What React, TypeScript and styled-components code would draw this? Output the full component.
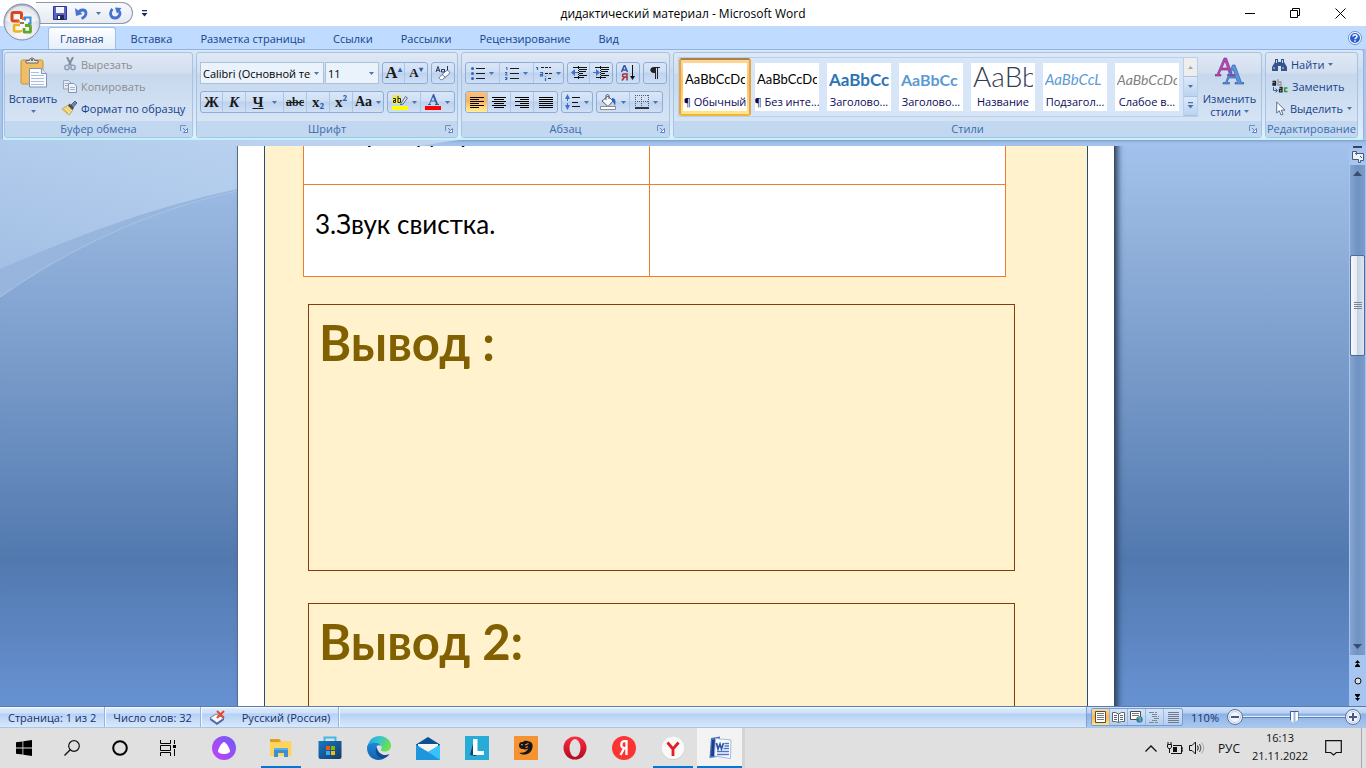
import React from "react";
import styled, { createGlobalStyle, css } from "styled-components";

const GlobalStyle = createGlobalStyle`
  * { box-sizing: border-box; }
  html, body { margin: 0; padding: 0; }
  body { font-family: "Open Sans", "Noto Sans", sans-serif; font-size: 11px; color: #15428b; }
  button, select, input { font: inherit; color: inherit; margin: 0; }
  button { border: 0; background: none; padding: 0; white-space: nowrap; }
`;

const Screen = styled.div`
  display: flex;
  flex-direction: column;
  height: 100vh;
  overflow: hidden;
`;

/* ---------- title bar ---------- */

const TitleBar = styled.header`
  position: relative;
  display: grid;
  grid-template-columns: 1fr auto 1fr;
  align-items: center;
  height: 26px;
  flex: none;
  background: #fff;
`;

const QuickAccess = styled.div`
  display: flex;
  align-items: center;
  gap: 8px;
  padding-left: 36px;
`;

const QuickPill = styled.div`
  display: flex;
  align-items: center;
  gap: 8px;
  height: 22px;
  width: 97px;
  padding-left: 17px;
  border: 1px solid #8d98a8;
  border-left: 0;
  border-radius: 0 11px 11px 0;
  background: linear-gradient(#f7f9fc, #e6ebf3);
`;

const IconButton = styled.button`
  display: inline-flex;
  align-items: center;
  justify-content: center;
`;

const Caption = styled.h1`
  margin: 0;
  font-size: 12px;
  font-weight: 400;
  color: #000;
  white-space: nowrap;
`;

const WindowButtons = styled.div`
  display: flex;
  justify-content: flex-end;
  padding-right: 3px;
`;

const WindowButton = styled(IconButton)`
  width: 45px;
  height: 24px;
`;

const OfficeButton = styled.button`
  position: absolute;
  z-index: 2;
  left: 3px;
  top: 3px;
  width: 38px;
  height: 38px;
`;

/* ---------- ribbon ---------- */

const TabRow = styled.nav`
  display: flex;
  align-items: flex-end;
  height: 23px;
  flex: none;
  padding: 0 4px 0 48px;
  background: #bfdbff;
`;

const Tab = styled.button<{ $active?: boolean }>`
  height: 22px;
  padding: 0 13px;
  border: 1px solid transparent;
  border-bottom: 0;
  ${(p) =>
    p.$active &&
    css`
      padding: 0 11px;
      margin-right: 1px;
      border-color: #9dbde8;
      border-radius: 3px 3px 0 0;
      background: linear-gradient(#fdfeff, #e4eefa);
    `}
`;

const HelpButton = styled(IconButton)`
  margin-left: auto;
  height: 22px;
`;

const RibbonShell = styled.div`
  flex: none;
  background: #a9c5ec;
  padding: 0 2px;
`;

const Ribbon = styled.div`
  display: flex;
  gap: 3px;
  height: 91px;
  padding: 2px 5px 2px 1px;
  border: 1px solid #8db2e3;
  border-bottom: 2px solid #c3f2fa;
  border-radius: 3px;
  background: linear-gradient(#dce7f5 0, #d0deef 20%, #c8d9ed 22%, #dfeefb 100%);
`;

const Group = styled.section<{ $w?: number }>`
  display: flex;
  flex-direction: column;
  height: 86px;
  width: ${(p) => (p.$w ? p.$w + "px" : "auto")};
  flex: ${(p) => (p.$w ? "none" : "1")};
  min-width: 0;
  border: 1px solid #a5c3e4;
  border-radius: 3px;
  background: linear-gradient(#dfe8f4 0, #d3dfef 20px, #c7d8ed 21px, #dbe8f7 100%);
  overflow: hidden;
`;

const GroupBody = styled.div`
  display: flex;
  flex: 1;
  min-height: 0;
`;

const GroupLabel = styled.footer`
  display: grid;
  grid-template-columns: 16px 1fr 16px;
  align-items: center;
  justify-items: center;
  height: 16px;
  line-height: 16px;
  background: #c2d8f1;
  color: #3e6aaa;
  white-space: nowrap;
`;

const GroupName = styled.span<{ $full?: boolean }>`
  grid-column: ${(p) => (p.$full ? "1 / 4" : "2")};
`;

const BigButton = styled.button<{ $w: number }>`
  display: flex;
  flex-direction: column;
  align-items: center;
  width: ${(p) => p.$w}px;
  padding-top: 4px;
  line-height: 13px;
`;

const BigText = styled.span<{ $top: number }>`
  margin-top: ${(p) => p.$top}px;
  text-align: center;
`;

const CommandList = styled.div`
  display: flex;
  flex-direction: column;
`;

const Command = styled.button<{ $pad?: number }>`
  display: flex;
  align-items: center;
  gap: 4px;
  height: 22px;
  padding-left: ${(p) => p.$pad || 0}px;
  &:disabled { color: #8d8d8d; }
`;

const ToolRows = styled.div`
  display: flex;
  flex-direction: column;
  gap: 7px;
  padding: 9px 3px 0;
`;

const ToolRow = styled.div`
  display: flex;
  gap: 3px;
  height: 22px;
`;

const ToolSet = styled.div`
  display: flex;
  flex: none;
  height: 22px;
  border: 1px solid #8eaeda;
  border-radius: 3px;
  background: linear-gradient(#d9e6f7 0, #cfdff4 9px, #bdd2ee 10px, #cfe0f6 100%);
  overflow: hidden;
`;

const Tool = styled.button<{ $w: number; $on?: boolean }>`
  display: flex;
  align-items: center;
  justify-content: center;
  gap: 4px;
  width: ${(p) => p.$w}px;
  border-right: 1px solid #aec6e6;
  background: ${(p) => (p.$on ? "linear-gradient(#f5c088, #fbb45c 45%, #ffdc7c 80%, #ffeb9a)" : "none")};
  &:last-child { border-right: 0; }
`;

const ComboPair = styled.div`
  display: flex;
  gap: 1px;
`;

const Combo = styled.div<{ $w: number }>`
  display: grid;
  grid-template-columns: 1fr;
  align-items: center;
  width: ${(p) => p.$w}px;
  height: 22px;
  border: 1px solid #abc1de;
  background: #eaf2fb;
  & > * { grid-area: 1 / 1; }
  & > svg { justify-self: end; margin-right: 4px; pointer-events: none; }
`;

const ComboSelect = styled.select`
  appearance: none;
  width: 100%;
  height: 20px;
  padding: 0 12px 0 2px;
  border: 0;
  background: transparent;
  color: #000;
  overflow: hidden;
`;

const Serif = styled.span<{ $size?: number; $italic?: boolean; $under?: boolean; $strike?: boolean }>`
  font-family: "Liberation Serif", serif;
  font-weight: 700;
  font-size: ${(p) => p.$size || 15}px;
  line-height: 18px;
  color: #1a1a1a;
  font-style: ${(p) => (p.$italic ? "italic" : "normal")};
  text-decoration: ${(p) => (p.$under ? "underline" : p.$strike ? "line-through" : "none")};
`;

const Script = styled.span<{ $sup?: boolean }>`
  font-size: 8px;
  font-weight: 700;
  line-height: 8px;
  color: #2f5fb8;
  margin-left: -4px;
  align-self: ${(p) => (p.$sup ? "flex-start" : "flex-end")};
  padding: 2px 0;
`;

/* ---------- styles gallery ---------- */

const Gallery = styled.div`
  display: flex;
  flex: 1;
  min-width: 0;
  height: 60px;
  margin: 4px 0 0 4px;
  border: 1px solid #b9d0ed;
  background: #d6e6f8;
  overflow: hidden;
`;

const StyleCards = styled.div`
  display: flex;
  flex: 1;
  min-width: 0;
  overflow: hidden;
`;

const StyleCard = styled.button<{ $on?: boolean }>`
  display: flex;
  flex: none;
  width: 72px;
  height: 58px;
  padding: 3px 2px;
  border: 2px solid transparent;
  border-radius: 3px;
  ${(p) =>
    p.$on &&
    css`
      border-color: #a8804c #e2a548 #f2b730;
      background: linear-gradient(#ffd596, #ffc05c 45%, #ffe58c);
    `}
`;

const CardFace = styled.span`
  display: flex;
  flex-direction: column;
  justify-content: space-between;
  align-items: center;
  width: 64px;
  height: 48px;
  background: #fff;
  overflow: hidden;
`;

const Sample = styled.span<{ $c: string; $size: number; $italic?: boolean; $weight?: number }>`
  width: 60px;
  height: 31px;
  line-height: ${(p) => (p.$size > 20 ? 26 : 33)}px;
  overflow: hidden;
  text-align: left;
  font-family: Lato, "Open Sans", sans-serif;
  font-size: ${(p) => p.$size}px;
  font-style: ${(p) => (p.$italic ? "italic" : "normal")};
  font-weight: ${(p) => p.$weight || 400};
  color: ${(p) => p.$c};
`;

const CardName = styled.span`
  height: 17px;
  line-height: 15px;
  color: #0a0a5a;
`;

const GalleryScroll = styled.div`
  display: flex;
  flex-direction: column;
  width: 14px;
  flex: none;
  border-left: 1px solid #b9d0ed;
`;

const GalleryStep = styled(IconButton)<{ $off?: boolean }>`
  flex: 1;
  background: ${(p) => (p.$off ? "#eeeeee" : "linear-gradient(#dce9f9, #bcd3f0)")};
  border-bottom: 1px solid #a9c3e6;
`;

/* ---------- workspace ---------- */

const Workspace = styled.main`
  position: relative;
  display: flex;
  flex: 1;
  min-height: 0;
  padding-top: 6px;
  background: linear-gradient(#a3c3ee 0, #98b7e0 12%, #5279af 74%, #6792d2 100%);
  box-shadow: inset 0 3px 3px -2px #7d95bb;
`;

const Swoosh = styled.svg`
  position: absolute;
  left: 0;
  top: 0;
`;

const Viewport = styled.div`
  position: relative;
  flex: 1;
  padding-left: 3px;
  overflow: hidden;
`;

/* The sheet is scrolled so that the table's second row is cut by the ribbon. */
const Sheet = styled.article`
  width: 878px;
  height: 900px;
  margin: -54px auto 0;
  padding: 0 26px;
  border-left: 1px solid #5a6b88;
  border-right: 1px solid #3c4a60;
  background: #fff;
  box-shadow: 4px 0 6px -1px #2d4266;
`;

const SheetFrame = styled.div`
  height: 100%;
  padding-left: 38px;
  border-left: 1px solid #1f4e79;
  border-right: 1px solid #1f4e79;
  background: #fff2cc;
`;

const SoundTable = styled.table`
  width: 703px;
  table-layout: fixed;
  border-collapse: collapse;
  background: #fff;
  font-family: Lato, "Open Sans", sans-serif;
  font-size: 26px;
  color: #000;
  td {
    height: 92px;
    padding: 0 11px 13px;
    border: 1px solid #ed7d31;
  }
`;

const Conclusion = styled.section<{ $gap: number }>`
  width: 707px;
  height: 267px;
  margin: ${(p) => p.$gap}px 0 0 5px;
  padding: 5px 10px;
  border: 1px solid #843c0c;
  h2 {
    margin: 0;
    font-family: Lato, "Open Sans", sans-serif;
    font-size: 49px;
    line-height: 64px;
    font-weight: 700;
    color: #806000;
  }
`;

const ScrollBar = styled.aside`
  display: flex;
  flex-direction: column;
  align-items: center;
  width: 17px;
  flex: none;
  background: #a6c5f0;
`;

const ScrollTrack = styled.div`
  display: flex;
  flex-direction: column;
  align-items: center;
  flex: 1;
  width: 15px;
  background: linear-gradient(90deg, #86a5d0, #6f93c4 50%, #7c9dcb);
`;

const ScrollThumb = styled.button`
  display: grid;
  place-items: center;
  width: 15px;
  height: 101px;
  border: 1px solid #51699a;
  border-radius: 2px;
  background: linear-gradient(90deg, #f6f8fb, #e6ebf3 45%, #c5d2e3 50%, #dde6f1);
`;

const ScrollStep = styled(IconButton)<{ $h: number }>`
  width: 15px;
  height: ${(p) => p.$h}px;
`;

const Spacer = styled.div<{ $h?: number }>`
  ${(p) => (p.$h ? `height: ${p.$h}px;` : "flex: 1;")}
`;

/* ---------- status bar ---------- */

const StatusBar = styled.footer`
  display: flex;
  height: 22px;
  flex: none;
  border-top: 1px solid #567db1;
  border-bottom: 1px solid #a9c5ea;
  background: linear-gradient(#ffffff 0, #d8e7fb 2px, #cfe1f9 6px, #b4d1f5 7px, #dae8fa 100%);
  color: #15306e;
`;

const StatusItem = styled.button<{ $open?: boolean }>`
  display: flex;
  align-items: center;
  padding: 0 8px;
  ${(p) =>
    !p.$open &&
    css`
      border-right: 1px solid #93b3dd;
      box-shadow: 1px 0 0 #f4f9ff;
    `}
`;

const StatusRight = styled.div`
  display: flex;
  align-items: center;
  margin-left: auto;
  padding: 0 5px 0 4px;
  border-left: 1px solid #7f9fce;
  background: linear-gradient(#d0e2fa 0, #b5d0f5 6px, #8db2e3 7px, #a9c8f0 100%);
`;

const ViewSet = styled.div`
  display: flex;
  height: 18px;
  border: 1px solid #7a9bcb;
  border-radius: 2px;
  background: linear-gradient(#d5e4f8, #b4cdef);
`;

const ViewButton = styled(IconButton)<{ $on?: boolean }>`
  width: 18px;
  border-right: 1px solid #9bb8e0;
  background: ${(p) => (p.$on ? "linear-gradient(#f8d8a0, #fdb64d 50%, #ffe08a)" : "none")};
  &:last-child { border-right: 0; }
`;

const ZoomValue = styled.button`
  width: 44px;
`;

const ZoomRange = styled.input`
  appearance: none;
  width: 102px;
  height: 16px;
  background: linear-gradient(#e6f0fd 1px, #5c7fb5 1px) center / 100% 2px no-repeat;
  &::-webkit-slider-thumb {
    appearance: none;
    width: 9px;
    height: 13px;
    background: linear-gradient(90deg, #3f5f96 1px, #fff 1px, #fff 3px, #9fb6da 4px, #9fb6da 5px, #fff 6px, #fff 8px, #3f5f96 8px);
    border-top: 1px solid #3f5f96;
    clip-path: polygon(0 0, 100% 0, 100% 65%, 50% 100%, 0 65%);
  }
`;

/* ---------- taskbar ---------- */

const Taskbar = styled.footer`
  display: flex;
  height: 40px;
  flex: none;
  background: #e0e0e0;
  color: #111;
`;

const TaskButton = styled(IconButton)<{ $w: number; $line?: boolean; $active?: boolean }>`
  width: ${(p) => p.$w}px;
  height: 40px;
  flex: none;
  ${(p) =>
    p.$line &&
    css`
      background: linear-gradient(#0078d7, #0078d7) bottom / 40px 2px no-repeat;
    `}
  ${(p) =>
    p.$active &&
    css`
      border-right: 3px solid #d2d4d6;
      background: linear-gradient(#0078d7, #0078d7) bottom / 100% 2px no-repeat, #f3f3f3;
    `}
`;

const Tray = styled.div`
  display: flex;
  align-items: center;
  margin-left: auto;
  padding-right: 4px;
`;

const Language = styled.button`
  width: 44px;
  font-size: 12px;
`;

const Clock = styled.time`
  width: 58px;
  text-align: center;
  line-height: 18px;
  padding-bottom: 2px;
`;

const DesktopEdge = styled.button`
  width: 1px;
  height: 40px;
  margin-left: 4px;
  background: #a8a8a8;
`;

/* ---------- icons ---------- */

type IconProps = { w: number; h: number; children: React.ReactNode };
const Icon = ({ w, h, children }: IconProps) => (
  <svg width={w} height={h} viewBox={`0 0 ${w} ${h}`} aria-hidden="true" display="block" fill="none">
    {children}
  </svg>
);

const Caret = ({ c = "#4c74ad" }: { c?: string }) => (
  <Icon w={5} h={3}><path d="M0 0h5L2.500 3z" fill={c} /></Icon>
);

const OfficeLogo = () => (
  <Icon w={38} h={38}>
    <defs>
      <radialGradient id="orb" cx="50%" cy="75%" r="75%">
        <stop offset="0" stopColor="#ffffff" />
        <stop offset=".55" stopColor="#e3e7ee" />
        <stop offset="1" stopColor="#a8b2c4" />
      </radialGradient>
    </defs>
    <circle cx="19" cy="19" r="18" fill="url(#orb)" stroke="#7d8ba3" />
    <path d="M3 18a16 15 0 0 1 32 0c-8 2-22 3-32 0z" fill="#fff" opacity=".6" />
    <path d="M16 18h-5.500q-1.500 0-1.500-1.500V11q0-1.500 1.500-1.500H17q1.500 0 1.500 1.500v5" stroke="#d9481a" strokeWidth="3" />
    <path d="M22 17.500v-3h5.500v6H25" stroke="#3b8fd8" strokeWidth="2" />
    <path d="M17 22h-5q-1 0-1 1v4q0 1.500 1.500 1.500h4q1.500 0 1.500-1.500" stroke="#f0b418" strokeWidth="2.600" />
    <path d="M22 22.500h4.500q1 0 1 1V28q0 1.200-1 1.200H22q-1 0-1-1.200v-3" stroke="#62a62c" strokeWidth="2.800" />
    <path d="M14 18.500h3M20 14v3" stroke="#e8762c" strokeWidth="2" />
    <path d="M20 19v2M17 20h2" stroke="#7a4a20" strokeWidth="1.500" />
  </Icon>
);

const SaveIcon = () => (
  <Icon w={14} h={14}>
    <path d="M.5.5h13v13h-13z" fill="#5a64c8" stroke="#2c3494" />
    <path d="M3 1h8v6H3z" fill="#f3f6ff" />
    <path d="M4 9h7v5H4z" fill="#20265e" />
    <path d="M5 10h2v3H5z" fill="#fff" />
  </Icon>
);
const UndoIcon = () => (
  <Icon w={13} h={13}>
    <path d="M3 6c2-3.500 7.500-4.500 8 0 0 3-2 4.500-4.500 5.500" stroke="#4573cf" strokeWidth="2.800" />
    <path d="M0 1l1 8 6.500-2z" fill="#4573cf" />
  </Icon>
);
const RedoIcon = () => (
  <Icon w={13} h={13}>
    <path d="M3.500 2C0 5.500 1.500 11 6 11s6.500-5 3.500-7.500" stroke="#4573cf" strokeWidth="2.800" />
    <path d="M6 .5l6.500.5L8 6.500z" fill="#4573cf" />
  </Icon>
);
const CustomizeIcon = ({ c = "#1c2b5a" }: { c?: string }) => (
  <Icon w={7} h={7}><path d="M1 0h5v1.200H1zM.5 3h6L3.500 6.500z" fill={c} /></Icon>
);

const HelpIcon = () => (
  <Icon w={14} h={14}>
    <circle cx="7" cy="7" r="6.500" fill="#fff" stroke="#6d8fc8" />
    <circle cx="7" cy="7" r="5" fill="#2a5fd0" />
    <path d="M5 5.500C5 3 9 3 9 5.500c0 1.300-2 1.300-2 2.800M7 9.300v1.400" stroke="#fff" strokeWidth="1.500" />
  </Icon>
);

const PasteIcon = () => (
  <Icon w={30} h={31}>
    <rect x="3" y="3" width="22" height="24" rx="1.500" fill="#efbd62" stroke="#c8913c" />
    <path d="M8 6V3.500h3.500a2.500 2.500 0 0 1 5 0H20V6z" fill="#e8e8e8" stroke="#666" />
    <circle cx="14" cy="3" r="1" fill="#444" />
    <path d="M11.500 11.500h12l5 5v13.500h-17z" fill="#fbfcfe" stroke="#7b93bb" />
    <path d="M23.500 11.500v5h5" fill="#dbe5f4" stroke="#7b93bb" />
    <path d="M13 15.500h8M13 18.500h13M13 21.500h13M13 24.500h13M13 27.500h13" stroke="#a9bedc" />
  </Icon>
);
const CutIcon = () => (
  <Icon w={14} h={14}>
    <path d="M4 0l4 8M10 0L6 8" stroke="#7d8fa8" strokeWidth="2" />
    <circle cx="4" cy="10.500" r="2.200" stroke="#8fa0b8" strokeWidth="1.500" />
    <circle cx="10" cy="10.500" r="2.200" stroke="#8fa0b8" strokeWidth="1.500" />
  </Icon>
);
const CopyIcon = () => (
  <Icon w={14} h={14}>
    <path d="M.5 1.500h5l2.500 2.500v6H.5z" fill="#e3e9f2" stroke="#93a5c0" />
    <path d="M5.500 4.500h5.500L13.500 7v6.500h-8z" fill="#eef2f8" stroke="#8396b5" />
    <path d="M7 8.500h5M7 10.500h5M2 4.500h3M2 6.500h3" stroke="#a7b6cc" />
  </Icon>
);
const BrushIcon = () => (
  <Icon w={15} h={14}>
    <path d="M9 4l4-4 2 2-4 4.500z" fill="#6f86b0" stroke="#3b4c6e" strokeWidth=".8" />
    <path d="M7.500 2.500l4.500 4.500-1.500 2L6 4.500z" fill="#4a4a4a" />
    <path d="M5.500 4.500l5 5L7 14 0 8z" fill="#f7e492" stroke="#b29238" strokeWidth=".8" />
    <path d="M2 8l4 4M4 6.500l4 4" stroke="#d4b650" />
  </Icon>
);
const LauncherIcon = () => (
  <Icon w={8} h={8}>
    <path d="M.5 6V.5H6" stroke="#6f8fbf" />
    <path d="M3 3l3 3M7.500 3.500v4h-4z" stroke="#5f82b8" fill="#fff" />
  </Icon>
);
const EraserIcon = () => (
  <Icon w={16} h={16}>
    <path d="M1 7l2-5.500L5 7M2 5.300h2.500M6.500 7V4.500h3V7h-3M12.500 1v5" stroke="#26355f" />
    <path d="M4.500 12l6.500-6c2-1.500 5 1 3 3l-6.500 5.500c-1.500 1-4-1-3-2.500z" fill="#fff" stroke="#5f7499" />
    <path d="M7 9.500l3.500 3" stroke="#5f7499" />
  </Icon>
);
const HighlightIcon = () => (
  <Icon w={16} h={16}>
    <path d="M0 1h9v9H0z" fill="#eee85c" />
    <path d="M1 4.500h2.500v4H1.500v-2h2M6 2v6.500h2.500v-4H6" stroke="#222" />
    <path d="M9 9.500l4.500-7 2 1.500-4.500 6-2.500.8z" fill="#e8edf5" stroke="#54657f" />
    <path d="M0 12h16v4H0z" fill="#ffff00" />
  </Icon>
);
const BulletsIcon = ({ numbered }: { numbered?: boolean }) => (
  <Icon w={14} h={13}>
    {numbered ? (
      <path d="M1 .5h1V3M0 5.500h2L.5 8h2M0 10.500h2v1H.8M2 11.500v1H0" stroke="#3b63b5" />
    ) : (
      <g fill="#3b63b5"><circle cx="1.500" cy="1.500" r="1.500" /><circle cx="1.500" cy="6.500" r="1.500" /><circle cx="1.500" cy="11.500" r="1.500" /></g>
    )}
    <path d="M5 1.500h9M5 6.500h9M5 11.500h9" stroke="#1c1c1c" />
  </Icon>
);
const MultiListIcon = () => (
  <Icon w={16} h={15}>
    <path d="M0 1.500h1.500V4M4 6.500h2.500V10H4.500V8.500H6M9.500 10v.8M9.500 12v3" stroke="#3b63b5" strokeWidth="1.200" />
    <path d="M5 1.500h10M9 7.500h7M12 12.500h4" stroke="#1c1c1c" strokeDasharray="3 1" />
  </Icon>
);
const IndentIcon = ({ right }: { right?: boolean }) => (
  <Icon w={16} h={14}>
    <path d="M2 1.500h14M8 3.500h8M8 5.500h7M8 7.500h4M8 9.500h8M3 11.500h10" stroke="#111" strokeWidth="1.200" />
    <path d={right ? "M0 6h3V3l4 3.500L3 10V7H0z" : "M7 6H4V3L0 6.500 4 10V7h3z"} fill="#3f70cc" />
    <path d="M7.500 0v14" stroke="#111" strokeDasharray="1 1" />
  </Icon>
);
const SortIcon = () => (
  <Icon w={15} h={16}>
    <path d="M.5 7L3.500 0l3 7M1.500 5h4" stroke="#2f55a8" strokeWidth="1.500" />
    <path d="M6 15.500V9H3C1 9 1 12 3 12h3M3.500 12L1 15.500" stroke="#a83232" strokeWidth="1.500" />
    <path d="M11.500 0v13" stroke="#111" />
    <path d="M9 11h5l-2.500 4z" fill="#111" />
  </Icon>
);
const PilcrowIcon = () => (
  <Icon w={10} h={12}>
    <path d="M10 0H4C-1 0-1 6 4 6h1v6h1V1h1v11h1V1h2z" fill="#222" />
  </Icon>
);
const alignLines: Record<string, string> = {
  left: "M0 .5h14M0 2.500h9M0 4.500h14M0 6.500h9M0 8.500h14M0 10.500h9",
  center: "M0 .5h14M2 2.500h10M0 4.500h14M2 6.500h10M0 8.500h14M2 10.500h10",
  right: "M0 .5h14M5 2.500h9M0 4.500h14M5 6.500h9M0 8.500h14M5 10.500h9",
  full: "M0 .5h14M0 2.500h14M0 4.500h14M0 6.500h14M0 8.500h14M0 10.500h14",
};
const AlignIcon = ({ kind }: { kind: string }) => (
  <Icon w={14} h={11}><path d={alignLines[kind]} stroke="#000" /></Icon>
);
const SpacingIcon = () => (
  <Icon w={15} h={16}>
    <path d="M2.500 3v10" stroke="#3f70cc" strokeDasharray="4 2" />
    <path d="M0 5l2.500-5L5 5zM0 11l2.500 5L5 11z" fill="#3f70cc" />
    <path d="M7 3.500h8M7 8.500h6M7 12.500h8" stroke="#111" />
  </Icon>
);
const FillIcon = () => (
  <Icon w={17} h={16}>
    <path d="M2 7l6-5 5 5-5 5.500z" fill="#f4f7fb" stroke="#555f70" />
    <path d="M6 6V2c0-2 3-2 3 0v3" stroke="#555f70" />
    <path d="M12 4c4 0 4 4 3 8-1-3-2-4-3-5z" fill="#2e62c0" />
    <path d="M.5 12.500h15v3H.5z" fill="#fff" stroke="#8d8d8d" />
  </Icon>
);
const BordersIcon = () => (
  <Icon w={14} h={14}>
    <path d="M.5 0v12M13.500 0v12M0 .5h14M6.500 0v12M0 6.500h14" stroke="#4d5a70" strokeDasharray="1 1" />
    <path d="M0 13h14" stroke="#000" strokeWidth="1.500" />
  </Icon>
);
const ChangeStylesIcon = () => (
  <Icon w={29} h={28}>
    <path d="M0 19v-1.500h2L9 1h2.500l6 16.500h2V19h-7v-1.500h2L13 13H6l-2 4.500h2V19zM7 11h5.500L10 4z" fill="#b347b5" stroke="#7c2d85" strokeWidth=".6" />
    <path d="M8 27v-1.500h2.500L17.500 8H20l6.500 17.500H29V27h-9v-1.500h2.500L21 21h-7l-2 4.500h2.500V27zM14.500 19h6L18 12z" fill="#5b93e0" stroke="#2b559c" strokeWidth=".6" />
  </Icon>
);
const FindIcon = () => (
  <Icon w={15} h={13}>
    <path d="M3 1h3v3h3V1h3v3l3 5v4H9V8H6v5H0V9l3-5z" fill="#35538c" />
    <path d="M2 9v2M11 9v2M4.500 2v3M10.500 2v3" stroke="#c9d9f2" />
  </Icon>
);
const ReplaceIcon = () => (
  <Icon w={16} h={14}>
    <path d="M.5 2.500h3V6H1V4.500h2.500" stroke="#222" strokeWidth="1.300" />
    <path d="M6 0v6h3V3H6" stroke="#9a9a9a" strokeWidth="1.300" />
    <path d="M1.500 8v3.500H5M3.500 9.500l2 2-2 2" stroke="#35629f" />
    <path d="M7.500 8.500H10v4.300H7.500V10.500H10" stroke="#222" strokeWidth="1.300" />
    <path d="M15.500 9h-2.800v3.500h2.800" stroke="#2a9a32" strokeWidth="1.600" />
  </Icon>
);
const PointerIcon = () => (
  <Icon w={10} h={15}>
    <path d="M.7 1v11l2.600-2.300L5 14l2-.8-1.800-4H9z" fill="#fff" stroke="#5a6f95" />
  </Icon>
);

const BookCheckIcon = () => (
  <Icon w={17} h={15}>
    <path d="M1 8l6-4 8 4-7 5z" fill="#f5f8fc" stroke="#6b7fa3" />
    <path d="M1 8v2l7 5 7-5V8l-7 5z" fill="#4d6ba8" />
    <path d="M8 1l7 7M15 1L8 8" stroke="#e04a2a" strokeWidth="2" />
  </Icon>
);
const PageLines = ({ kind }: { kind: string }) => (
  <Icon w={13} h={12}>
    {kind === "page" && (<g><path d="M1.500.5h10v11h-10z" fill="#fff" stroke="#4d4d4d" /><path d="M3 2.500h7M3 4.500h7M3 6.500h7M3 8.500h7" stroke="#777" /></g>)}
    {kind === "read" && (<path d="M.5 1.500h3l3 1.500 3-1.500h3v9h-3l-3 1-3-1h-3zM6.500 3v8M2 4.500h3M2 6.500h3M2 8.500h3M8 4.500h3M8 6.500h3M8 8.500h3" fill="#fff" stroke="#5b6470" />)}
    {kind === "web" && (<g><path d="M.5.5h10v8H.5z" fill="#fff" stroke="#4d4d4d" /><path d="M2 2.500h7M2 4.500h7" stroke="#777" /><circle cx="9.500" cy="8.500" r="3.200" fill="#3573b8" /><path d="M8 7c2-1 3 0 2 1s1 1 0 3" stroke="#5fc05a" strokeWidth="1.500" /></g>)}
    {kind === "outline" && (<path d="M1 1.500h8M4 3.500h6M4 5.500h7M6 7.500h5M4 9.500h6M1 11.500h9" stroke="#7d8796" strokeDasharray="5 1" />)}
    {kind === "draft" && (<path d="M1 1.500h11M1 3.500h11M1 5.500h11M1 7.500h11M1 9.500h11M1 11.500h11" stroke="#717b8c" />)}
  </Icon>
);
const ZoomIcon = ({ plus }: { plus?: boolean }) => (
  <Icon w={16} h={16}>
    <circle cx="8" cy="8" r="7.500" fill="#f2f6fc" stroke="#54719f" />
    <circle cx="8" cy="8" r="5.500" stroke="#c2cfe2" />
    <path d={plus ? "M4 8h8M8 4v8" : "M4 8h8"} stroke="#47598a" strokeWidth="2" />
  </Icon>
);

const appIcons: Record<string, React.ReactNode> = {
  start: <Icon w={16} h={16}><path d="M0 2.300l6.500-.9V7.600H0zM7.300 1.300L16 0v7.600H7.300zM0 8.400h6.500v6.200L0 13.700zM7.300 8.400H16V16l-8.700-1.300z" fill="#000" /></Icon>,
  search: <Icon w={16} h={16}><circle cx="10" cy="6" r="5.300" stroke="#111" strokeWidth="1.200" /><path d="M6.200 9.800L.5 15.500" stroke="#111" strokeWidth="1.300" /></Icon>,
  ring: <Icon w={16} h={16}><circle cx="8" cy="8" r="6.800" stroke="#000" strokeWidth="2" /></Icon>,
  tasks: <Icon w={17} h={16}><path d="M.5 0v3.500h10V0M.5 16v-3.500h10V16M.5 5.500h10v5H.5zM14.500 0v4M14.500 9v7" stroke="#000" /><path d="M13 5h3v3h-3z" fill="#000" /></Icon>,
  alice: (
    <Icon w={24} h={24}>
      <defs><linearGradient id="al" x1="0" y1="1" x2="1" y2="0"><stop offset="0" stopColor="#c840f8" /><stop offset="1" stopColor="#6a5cf8" /></linearGradient></defs>
      <circle cx="12" cy="12" r="12" fill="url(#al)" />
      <path d="M12 6c2 0 6 7 6 9s-3 3-6 3-6-1-6-3 4-9 6-9z" fill="#fff" />
    </Icon>
  ),
  folder: (
    <Icon w={22} h={20}>
      <path d="M0 1h9l2 2h10.500v15H0z" fill="#ffd45e" /><path d="M0 1h9l2 2-1 1H0z" fill="#dd9f1c" />
      <path d="M4 19v-8h14v8h-4v-4H8v4z" fill="#3e8fd0" /><path d="M4 10h14v2H4z" fill="#57aee8" />
    </Icon>
  ),
  store: (
    <Icon w={24} h={24}>
      <defs><linearGradient id="st" x1="0" y1="0" x2="1" y2="1"><stop offset="0" stopColor="#1479c4" /><stop offset="1" stopColor="#173a66" /></linearGradient></defs>
      <path d="M6.500 6V1.500h11V6" stroke="#40b8ea" strokeWidth="2" />
      <path d="M.5 5h23v16q0 2-2 2h-19q-2 0-2-2z" fill="url(#st)" />
      <path d="M8 10h4v4H8z" fill="#f25022" /><path d="M13 10h4v4h-4z" fill="#7fba00" /><path d="M8 15h4v4H8z" fill="#39a9f0" /><path d="M13 15h4v4h-4z" fill="#ffb900" />
    </Icon>
  ),
  edge: (
    <Icon w={24} h={24}>
      <defs>
        <linearGradient id="eg" x1="0" y1="0" x2="1" y2=".4"><stop offset="0" stopColor="#1f9fe0" /><stop offset=".5" stopColor="#35c5d0" /><stop offset="1" stopColor="#6be04e" /></linearGradient>
        <linearGradient id="eb" x1="0" y1="0" x2="0" y2="1"><stop offset="0" stopColor="#1d8ad8" /><stop offset="1" stopColor="#1460b0" /></linearGradient>
      </defs>
      <path d="M.5 10C2 3.500 7 0 12.500 0 19 0 24 4.500 24 9.500c0 4-3 6-6.500 6-3 0-4-1-3.500-2 2-3-.5-5.500-4.500-5.500C5 8 1.500 9 .5 12z" fill="url(#eg)" />
      <path d="M0 12C0 8 4 6.500 8 6.700c3 .2 5.500 1.500 6 3.500-2-2-4.500-1-5 2-1 5 4 9.500 10 8.500-2 2.200-4.500 3.300-7.500 3.300C5 24 0 19 0 12z" fill="url(#eb)" />
      <path d="M9.500 10.500c-2.500 6 1.500 12 6.500 12 2.500-.5 5-2 6.500-4.500-5 2.500-11.500.5-13-7.500z" fill="#124a96" />
    </Icon>
  ),
  mail: (
    <Icon w={24} h={23}>
      <path d="M0 7.500L12 0l12 7.500V10H0z" fill="#0c4f93" /><path d="M2 7h20v2l-10 6L2 9z" fill="#f4f4f4" />
      <path d="M0 8l12 7 12-7v15H0z" fill="#2fa9ea" /><path d="M12 15l12-7v15z" fill="#37c2fa" /><path d="M0 8l12 7 12 8H0z" fill="#1f95dd" />
    </Icon>
  ),
  letter: (
    <Icon w={24} h={24}>
      <path d="M0 0h24v24H0z" fill="#27acd8" /><path d="M9 4l-4 15 5 1 2-1z" fill="#123e6c" />
      <path d="M8 3h4.500v12H19v4H8z" fill="#fff" />
    </Icon>
  ),
  phone: (
    <Icon w={24} h={24}>
      <path d="M0 0h24v24H0z" fill="#f59331" />
      <path d="M5 9.500C5 6.500 7 5.500 9 6c1-1.500 4-1.500 6-.5 3 .5 4 3 3.500 6-1 4.500-4 7-8.500 7-2 0-4-.5-4.500-2 3.500.8 7-.5 9-4-2 1-3.500 1.500-5 .5-2.500.5-4.500-1-4.500-3.500z" fill="#161616" />
      <path d="M7 8.500l2 .5M11 9l3.500-1.500M11.500 11.500l2.500-.8" stroke="#f59331" strokeWidth="1.200" />
    </Icon>
  ),
  opera: (
    <Icon w={24} h={24}>
      <defs><linearGradient id="op" x1="0" y1="0" x2="0" y2="1"><stop offset="0" stopColor="#ff2a45" /><stop offset="1" stopColor="#b00a20" /></linearGradient></defs>
      <ellipse cx="12" cy="12" rx="11.500" ry="11.500" fill="url(#op)" /><ellipse cx="12" cy="12" rx="5.500" ry="9" fill="#e0e0e0" />
    </Icon>
  ),
  yandex: (
    <Icon w={24} h={24}>
      <circle cx="12" cy="12" r="12" fill="#fc3433" />
      <path d="M14.500 19V5.200h-2c-4 0-4.500 7 .2 7h1.800M12 12.500L8.500 19" stroke="#fff" strokeWidth="2.300" />
    </Icon>
  ),
  browser: (
    <Icon w={24} h={24}>
      <circle cx="12" cy="12.500" r="11.200" fill="#bdbdbd" /><circle cx="12" cy="12" r="11.200" fill="#fafafa" />
      <path d="M6.500 6.500L12 13l5.500-6.500M12 12.500V20" stroke="#e01f26" strokeWidth="2.800" />
    </Icon>
  ),
  word: (
    <Icon w={24} h={24}>
      <path d="M3 2l9-1.500v20L1.500 22z" fill="#4a74c0" /><path d="M4 4l4-1v17H3z" fill="#1d3f8a" />
      <path d="M7.500 2.500L23 4l-.5 18.500L6.500 20z" fill="#fafcff" stroke="#a9b9d6" />
      <path d="M8.500 7l1.500 6 2-5 1.500 5L15.500 7" stroke="#2b56a5" strokeWidth="1.700" />
      <path d="M16.500 7.500H21M16.500 10h4.500M15.500 12.500h5.500M9 15.500h12M9 18.500h12" stroke="#4d78c2" strokeWidth="1.400" />
    </Icon>
  ),
};

const ChevronUp = () => <Icon w={12} h={7}><path d="M.5 6.500L6 1l5.500 5.500" stroke="#111" strokeWidth="1.300" /></Icon>;
const BatteryIcon = () => (
  <Icon w={16} h={13}>
    <path d="M6 3.500h8.500v8H4M14.500 6H16v3h-1.500" stroke="#111" /><path d="M6 5h4v5H6z" fill="#111" />
    <path d="M1 0v2M4 0v2M.5 2.500h4V5l-1 1.500h-2L.5 5zM2.500 6.500V11" stroke="#111" />
  </Icon>
);
const SoundIcon = () => (
  <Icon w={17} h={14}>
    <path d="M.5 4.500H3L6.500 1v12L3 9.500H.5z" stroke="#111" />
    <path d="M8.500 4.500q1.500 2.500 0 5" stroke="#111" /><path d="M10.500 3q3 4 0 8" stroke="#444" /><path d="M12.500 1.500q4.500 5.500 0 11" stroke="#aaa" />
  </Icon>
);
const NoteIcon = () => <Icon w={17} h={16}><path d="M.7.700h15.600v11.800h-5L8.500 15l-2.800-2.500h-5z" stroke="#111" strokeWidth="1.200" /></Icon>;

/* ---------- data ---------- */

const tabs = ["Главная", "Вставка", "Разметка страницы", "Ссылки", "Рассылки", "Рецензирование", "Вид"];

const cards = [
  { text: "AaBbCcDc", name: "¶ Обычный", c: "#000", size: 13 },
  { text: "AaBbCcDc", name: "¶ Без инте...", c: "#000", size: 13 },
  { text: "AaBbCc", name: "Заголово...", c: "#2e74b5", size: 17, weight: 700 },
  { text: "AaBbCc", name: "Заголово...", c: "#5b9bd5", size: 16, weight: 700 },
  { text: "AaBb", name: "Название", c: "#323e4f", size: 28, weight: 300 },
  { text: "AaBbCcL", name: "Подзагол...", c: "#5b9bd5", size: 15, italic: true },
  { text: "AaBbCcDc", name: "Слабое в...", c: "#808080", size: 14, italic: true },
];

const tasks = ["folder", "store", "edge", "mail", "letter", "phone", "opera", "yandex", "browser"];

const Footer = ({ name, plain }: { name: string; plain?: boolean }) => (
  <GroupLabel>
    <GroupName $full={plain}>{name}</GroupName>
    {!plain && <IconButton aria-label={`${name}: параметры`}><LauncherIcon /></IconButton>}
  </GroupLabel>
);

export default function App() {
  return (
    <Screen>
      <GlobalStyle />
      <TitleBar>
        <OfficeButton aria-label="Office"><OfficeLogo /></OfficeButton>
        <QuickAccess>
          <QuickPill>
            <IconButton aria-label="Сохранить"><SaveIcon /></IconButton>
            <IconButton aria-label="Отменить"><UndoIcon /></IconButton>
            <IconButton aria-label="Список отмены"><Caret /></IconButton>
            <IconButton aria-label="Повторить"><RedoIcon /></IconButton>
          </QuickPill>
          <IconButton aria-label="Настройка панели"><CustomizeIcon /></IconButton>
        </QuickAccess>
        <Caption>дидактический материал - Microsoft Word</Caption>
        <WindowButtons>
          <WindowButton aria-label="Свернуть"><Icon w={11} h={11}><path d="M0 5.500h10" stroke="#000" /></Icon></WindowButton>
          <WindowButton aria-label="Восстановить"><Icon w={11} h={11}><path d="M.5 2.500h7v7h-7zM2.500 2.500v-2h7v7h-2" stroke="#000" /></Icon></WindowButton>
          <WindowButton aria-label="Закрыть"><Icon w={11} h={11}><path d="M.5.5l10 10M10.500.5l-10 10" stroke="#000" /></Icon></WindowButton>
        </WindowButtons>
      </TitleBar>

      <TabRow>
        {tabs.map((t, i) => <Tab key={t} $active={i === 0}>{t}</Tab>)}
        <HelpButton aria-label="Справка"><HelpIcon /></HelpButton>
      </TabRow>

      <RibbonShell>
        <Ribbon>
          <Group $w={189}>
            <GroupBody>
              <BigButton $w={56}>
                <PasteIcon />
                <BigText $top={4}>Вставить</BigText>
                <Spacer $h={5} />
                <Caret />
              </BigButton>
              <CommandList>
                <Command disabled $pad={2}><CutIcon />Вырезать</Command>
                <Command disabled $pad={2}><CopyIcon />Копировать</Command>
                <Command $pad={1}><BrushIcon />Формат по образцу</Command>
              </CommandList>
            </GroupBody>
            <Footer name="Буфер обмена" />
          </Group>

          <Group $w={262}>
            <GroupBody>
              <ToolRows>
                <ToolRow>
                  <ComboPair>
                    <Combo $w={124}>
                      <ComboSelect aria-label="Шрифт"><option>Calibri (Основной текст)</option></ComboSelect>
                      <Caret />
                    </Combo>
                    <Combo $w={54}>
                      <ComboSelect aria-label="Размер шрифта"><option>11</option></ComboSelect>
                      <Caret />
                    </Combo>
                  </ComboPair>
                  <ToolSet>
                    <Tool $w={22} aria-label="Увеличить размер"><Serif $size={17}>A</Serif><Script $sup>▴</Script></Tool>
                    <Tool $w={22} aria-label="Уменьшить размер"><Serif $size={13}>A</Serif><Script $sup>▾</Script></Tool>
                  </ToolSet>
                  <ToolSet><Tool $w={22} aria-label="Очистить формат"><EraserIcon /></Tool></ToolSet>
                </ToolRow>
                <ToolRow>
                  <ToolSet>
                    <Tool $w={22}><Serif>Ж</Serif></Tool>
                    <Tool $w={23}><Serif $italic>К</Serif></Tool>
                    <Tool $w={38}><Serif $under>Ч</Serif><Spacer $h={1} as="i" /><Caret /></Tool>
                    <Tool $w={23}><Serif $size={12} $strike>abc</Serif></Tool>
                    <Tool $w={23}><Serif>x</Serif><Script>2</Script></Tool>
                    <Tool $w={23}><Serif>x</Serif><Script $sup>2</Script></Tool>
                    <Tool $w={30}><Serif $size={14}>Aa</Serif><Caret /></Tool>
                  </ToolSet>
                  <ToolSet>
                    <Tool $w={33} aria-label="Цвет выделения"><HighlightIcon /><Caret /></Tool>
                    <Tool $w={33} aria-label="Цвет текста">
                      <Icon w={16} h={16}>
                        <path d="M3 11v-1h1L8 0h1l4 10h1v1h-4v-1h1l-1-2.500H6L5 10h1v1zM6.500 6.500h3L8 3z" fill="#2f5cab" />
                        <path d="M0 12h16v4H0z" fill="#f00" />
                      </Icon>
                      <Caret />
                    </Tool>
                  </ToolSet>
                </ToolRow>
              </ToolRows>
            </GroupBody>
            <Footer name="Шрифт" />
          </Group>

          <Group $w={209}>
            <GroupBody>
              <ToolRows>
                <ToolRow>
                  <ToolSet>
                    <Tool $w={34} aria-label="Маркеры"><BulletsIcon /><Caret /></Tool>
                    <Tool $w={34} aria-label="Нумерация"><BulletsIcon numbered /><Caret /></Tool>
                    <Tool $w={29} aria-label="Многоуровневый список"><MultiListIcon /><Caret /></Tool>
                  </ToolSet>
                  <ToolSet>
                    <Tool $w={22} aria-label="Уменьшить отступ"><IndentIcon /></Tool>
                    <Tool $w={22} aria-label="Увеличить отступ"><IndentIcon right /></Tool>
                  </ToolSet>
                  <ToolSet><Tool $w={22} aria-label="Сортировка"><SortIcon /></Tool></ToolSet>
                  <ToolSet><Tool $w={22} aria-label="Все знаки"><PilcrowIcon /></Tool></ToolSet>
                </ToolRow>
                <ToolRow>
                  <ToolSet>
                    <Tool $w={22} $on aria-label="По левому краю"><AlignIcon kind="left" /></Tool>
                    <Tool $w={23} aria-label="По центру"><AlignIcon kind="center" /></Tool>
                    <Tool $w={23} aria-label="По правому краю"><AlignIcon kind="right" /></Tool>
                    <Tool $w={23} aria-label="По ширине"><AlignIcon kind="full" /></Tool>
                  </ToolSet>
                  <ToolSet><Tool $w={30} aria-label="Интервал"><SpacingIcon /><Caret /></Tool></ToolSet>
                  <ToolSet>
                    <Tool $w={33} aria-label="Заливка"><FillIcon /><Caret /></Tool>
                    <Tool $w={32} aria-label="Границы"><BordersIcon /><Caret /></Tool>
                  </ToolSet>
                </ToolRow>
              </ToolRows>
            </GroupBody>
            <Footer name="Абзац" />
          </Group>

          <Group>
            <GroupBody>
              <Gallery>
                <StyleCards>
                  {cards.map((s, i) => (
                    <StyleCard key={i} $on={i === 0}>
                      <CardFace>
                        <Sample $c={s.c} $size={s.size} $italic={s.italic} $weight={s.weight}>{s.text}</Sample>
                        <CardName>{s.name}</CardName>
                      </CardFace>
                    </StyleCard>
                  ))}
                </StyleCards>
                <GalleryScroll>
                  <GalleryStep $off aria-label="Вверх"><Icon w={5} h={3}><path d="M0 3h5L2.500 0z" fill="#a8a8a8" /></Icon></GalleryStep>
                  <GalleryStep aria-label="Вниз"><Caret /></GalleryStep>
                  <GalleryStep aria-label="Все стили"><CustomizeIcon c="#4c74ad" /></GalleryStep>
                </GalleryScroll>
              </Gallery>
              <BigButton $w={63}>
                <ChangeStylesIcon />
                <BigText $top={7}>Изменить<br />стили <svg width="5" height="6" viewBox="0 0 5 6"><path d="M0 0h5L2.500 3z" fill="#4c74ad" /></svg></BigText>
              </BigButton>
            </GroupBody>
            <Footer name="Стили" />
          </Group>

          <Group $w={93}>
            <GroupBody>
              <CommandList>
                <Command $pad={6}><FindIcon />Найти <Caret /></Command>
                <Command $pad={6}><ReplaceIcon />Заменить</Command>
                <Command $pad={10}><PointerIcon />Выделить <Caret /></Command>
              </CommandList>
            </GroupBody>
            <Footer name="Редактирование" plain />
          </Group>
        </Ribbon>
      </RibbonShell>

      <Workspace>
        <Swoosh width="470" height="170" viewBox="0 0 470 170" aria-hidden="true">
          <defs>
            <linearGradient id="sky" x1="0" y1="1" x2="1" y2="0">
              <stop offset="0" stopColor="#a3bfe4" />
              <stop offset=".5" stopColor="#b1ccec" />
              <stop offset="1" stopColor="#c2d5f2" />
            </linearGradient>
          </defs>
          <path d="M0 157C70 108 150 70 237 51L0 10z" fill="#97b5dd" />
          <path d="M0 157C70 108 150 70 237 51" fill="none" stroke="#a9c4e8" />
          <path d="M0 129C90 90 160 66 237 49 320 30 380 10 460 0H0z" fill="url(#sky)" />
        </Swoosh>
        <Viewport>
          <Sheet>
            <SheetFrame>
              <SoundTable>
                <colgroup><col width="346" /><col /></colgroup>
                <tbody>
                  <tr><td>2.Скрип двери.</td><td /></tr>
                  <tr><td>3.Звук свистка.</td><td /></tr>
                </tbody>
              </SoundTable>
              <Conclusion $gap={27}><h2>Вывод :</h2></Conclusion>
              <Conclusion $gap={32}><h2>Вывод 2:</h2></Conclusion>
            </SheetFrame>
          </Sheet>
        </Viewport>
        <ScrollBar>
          <ScrollStep $h={19} aria-label="Линейка">
            <Icon w={12} h={19}>
              <path d="M1 0h9v2H1z" fill="#3a4460" />
              <path d="M.5 5.500h4v2h7v7h-3v2h-2v-3h-6z" fill="#eef2f8" stroke="#4a5878" />
              <path d="M3 7l2 2M8 10l2 2" stroke="#4a5878" />
            </Icon>
          </ScrollStep>
          <ScrollTrack>
            <ScrollStep $h={17} aria-label="Вверх"><Icon w={9} h={5}><path d="M0 5h9L4.500 0z" fill="#3d4a70" /></Icon></ScrollStep>
            <Spacer $h={73} />
            <ScrollThumb aria-label="Ползунок"><Icon w={8} h={7}><path d="M0 .5h8M0 2.500h8M0 4.500h8M0 6.500h8" stroke="#7c8698" /></Icon></ScrollThumb>
            <Spacer />
            <ScrollStep $h={17} aria-label="Вниз"><Icon w={9} h={5}><path d="M0 0h9L4.500 5z" fill="#3d4a70" /></Icon></ScrollStep>
          </ScrollTrack>
          <ScrollStep $h={17} aria-label="Предыдущая страница"><Icon w={5} h={7}><path d="M0 3h5L2.500 0zM0 6h5L2.500 3zM0 6h5v1H0z" fill="#000" /></Icon></ScrollStep>
          <ScrollStep $h={17} aria-label="Объект перехода"><Icon w={8} h={8}><circle cx="4" cy="4" r="3" fill="#d9dce2" stroke="#111" /></Icon></ScrollStep>
          <ScrollStep $h={17} aria-label="Следующая страница"><Icon w={5} h={7}><path d="M0 0h5v1H0zM0 1h5L2.500 4zM0 4h5L2.500 7z" fill="#000" /></Icon></ScrollStep>
        </ScrollBar>
      </Workspace>

      <StatusBar>
        <StatusItem>Страница: 1 из 2</StatusItem>
        <StatusItem>Число слов: 32</StatusItem>
        <StatusItem $open aria-label="Правописание"><BookCheckIcon /></StatusItem>
        <StatusItem>Русский (Россия)</StatusItem>
        <StatusRight>
          <ViewSet>
            {["page", "read", "web", "outline", "draft"].map((k, i) => (
              <ViewButton key={k} $on={i === 0} aria-label={k}><PageLines kind={k} /></ViewButton>
            ))}
          </ViewSet>
          <ZoomValue>110%</ZoomValue>
          <IconButton aria-label="Уменьшить"><ZoomIcon /></IconButton>
          <ZoomRange type="range" min={0} max={100} defaultValue={50} aria-label="Масштаб" />
          <IconButton aria-label="Увеличить"><ZoomIcon plus /></IconButton>
        </StatusRight>
      </StatusBar>

      <Taskbar>
        {["start", "search", "ring", "tasks"].map((k) => <TaskButton key={k} $w={48} aria-label={k}>{appIcons[k]}</TaskButton>)}
        <TaskButton $w={64} aria-label="alice">{appIcons.alice}</TaskButton>
        {tasks.map((k) => (
          <TaskButton key={k} $w={49} $line={k === "folder" || k === "browser"} aria-label={k}>{appIcons[k]}</TaskButton>
        ))}
        <TaskButton $w={48} $active aria-label="word">{appIcons.word}</TaskButton>
        <Tray>
          <TaskButton $w={24} aria-label="Значки"><ChevronUp /></TaskButton>
          <TaskButton $w={24} aria-label="Батарея"><BatteryIcon /></TaskButton>
          <TaskButton $w={20} aria-label="Звук"><SoundIcon /></TaskButton>
          <Language>РУС</Language>
          <Clock>16:13<br />21.11.2022</Clock>
          <TaskButton $w={48} aria-label="Уведомления"><NoteIcon /></TaskButton>
          <DesktopEdge aria-label="Рабочий стол" />
        </Tray>
      </Taskbar>
    </Screen>
  );
}
